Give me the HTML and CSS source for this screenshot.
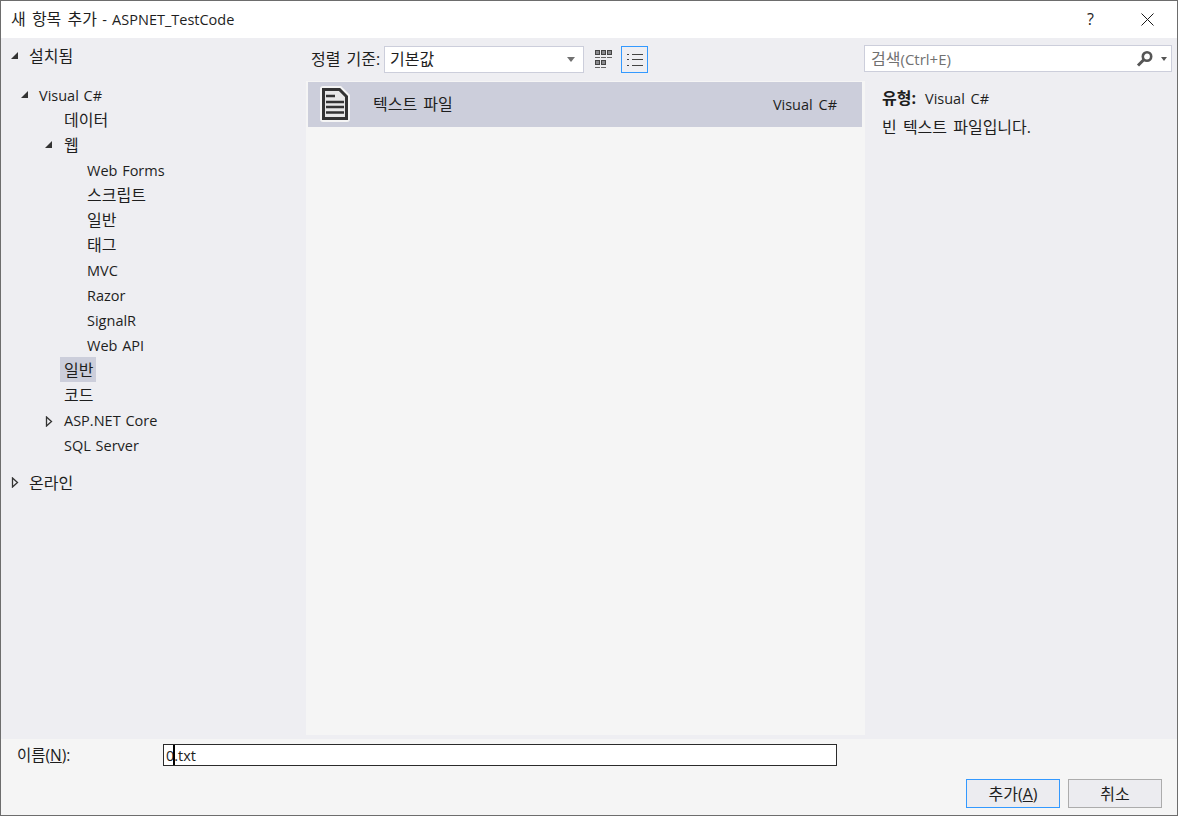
FILE: index.html
```html
<!DOCTYPE html>
<html lang="ko">
<head>
<meta charset="utf-8">
<title>새 항목 추가</title>
<link rel="stylesheet" href="styles.css">
</head>
<body>
<div class="window">
  <header class="titlebar">
    <div class="title"><span class="ko">새 항목 추가</span> - ASPNET_TestCode</div>
    <div class="help">?</div>
    <svg class="close" width="13" height="13" viewBox="0 0 13 13"><path d="M.5.5l12 12M12.500.5l-12 12" stroke="#1a1a1a" fill="none"/></svg>
  </header>
  <main class="main">
    <nav class="tree">
      <div class="row top"><svg class="arr" width="8" height="8" viewBox="0 0 8 8"><path d="M7 0v7H0z" fill="#333"/></svg><span class="ko">설치됨</span></div>
      <div class="group">
        <div class="row l1"><svg class="arr" width="8" height="8" viewBox="0 0 8 8"><path d="M7 0v7H0z" fill="#333"/></svg><span>Visual C#</span></div>
        <div class="row l2"><span class="ko">데이터</span></div>
        <div class="row l2"><svg class="arr" width="8" height="8" viewBox="0 0 8 8"><path d="M7 0v7H0z" fill="#333"/></svg><span class="ko">웹</span></div>
        <div class="row l3"><span>Web Forms</span></div>
        <div class="row l3"><span class="ko">스크립트</span></div>
        <div class="row l3"><span class="ko">일반</span></div>
        <div class="row l3"><span class="ko">태그</span></div>
        <div class="row l3"><span>MVC</span></div>
        <div class="row l3"><span>Razor</span></div>
        <div class="row l3"><span>SignalR</span></div>
        <div class="row l3"><span>Web API</span></div>
        <div class="row l2"><span class="ko sel">일반</span></div>
        <div class="row l2"><span class="ko">코드</span></div>
        <div class="row l2"><svg class="arr" width="8" height="11" viewBox="0 0 8 11"><path d="M1.500 1v9l5-4.500z" fill="none" stroke="#333" stroke-width="1.300"/></svg><span>ASP.NET Core</span></div>
        <div class="row l2"><span>SQL Server</span></div>
      </div>
      <div class="row top online"><svg class="arr" width="8" height="11" viewBox="0 0 8 11"><path d="M1.500 1v9l5-4.500z" fill="none" stroke="#333" stroke-width="1.300"/></svg><span class="ko">온라인</span></div>
    </nav>
    <section class="center">
      <div class="toolbar">
        <span class="ko sortlabel">정렬 기준:</span>
        <div class="combo"><span class="ko">기본값</span><i class="caret"></i></div>
        <svg class="gridicon" width="18" height="19" viewBox="0 0 18 19"><g fill="#8a8a8e" stroke="#444"><rect x=".5" y=".5" width="4" height="4"/><rect x="6.500" y=".5" width="4" height="4"/><rect x="12.500" y=".5" width="4" height="4"/><rect x=".5" y="10.500" width="4" height="4"/><rect x="6.500" y="10.500" width="4" height="4"/></g><path d="M0 7h5v1H0zM6 7h5v1H6zM12 7h5v1h-5zM0 17h5v1H0zM6 17h5v1H6z" fill="#666"/></svg>
        <div class="listbtn"><svg width="16" height="14" viewBox="0 0 16 14" fill="#444"><path d="M0 1h2v1H0zM5 1h11v1H5zM0 6h2v1H0zM5 6h11v1H5zM0 12h2v1H0zM5 12h11v1H5z"/></svg></div>
      </div>
      <div class="list">
        <div class="item">
          <svg class="doc" width="30" height="36" viewBox="0 0 30 36"><path d="M3 0h18l9 9v24a3 3 0 0 1-3 3H3a3 3 0 0 1-3-3V3a3 3 0 0 1 3-3z" fill="#f5f5f5"/><path d="M3.500 3.500h16l7 7v22h-23z" fill="#e8e8e8" stroke="#333" stroke-width="3"/><path d="M6 10h9M6 16h18M6 21h18M6 26.500h18" stroke="#333" stroke-width="2.400"/></svg>
          <span class="ko iname">텍스트 파일</span>
          <span class="itype">Visual C#</span>
        </div>
      </div>
    </section>
    <aside class="side">
      <div class="search"><span class="stext"><span class="ko">검색</span>(Ctrl+E)</span>
        <svg class="mag" width="17" height="16" viewBox="0 0 17 16"><circle cx="11" cy="5.500" r="4.200" fill="none" stroke="#555" stroke-width="2.600"/><path d="M8 8.500l-6 6" stroke="#555" stroke-width="3"/></svg>
        <i class="caret small"></i>
      </div>
      <div class="info">
        <div class="inforow"><b class="ko">유형:</b><span>Visual C#</span></div>
        <p class="ko desc">빈 텍스트 파일입니다.</p>
      </div>
    </aside>
  </main>
  <footer class="footer">
    <div class="namerow">
      <label class="ko namelabel">이름(<u>N</u>):</label>
      <div class="nameinput"><span>0</span><i class="cursor"></i><span class="ext">.txt</span></div>
    </div>
    <div class="buttons">
      <button class="ko btn primary">추가(<u>A</u>)</button>
      <button class="ko btn">취소</button>
    </div>
  </footer>
</div>
</body>
</html>
```
FILE: styles.css
```css
* { box-sizing: border-box; }
html, body { margin: 0; padding: 0; }
body {
  width: 1178px; height: 816px; overflow: hidden;
  font-family: "Open Sans", "Noto Sans CJK KR", sans-serif;
  font-size: 14.500px; word-spacing: 1px; color: #1e1e1e;
}
.ko { font-size: 16px; word-spacing: 2px; }
.window {
  width: 1178px; height: 816px; display: flex; flex-direction: column;
  border: 1px solid #6d6d6d; background: #eeeef2;
}
.titlebar { height: 37px; background: #fff; display: flex; align-items: center; padding: 0 23px 0 10px; flex: none; }
.title { flex: 1; padding-bottom: 4px; white-space: nowrap; word-spacing: 1.500px; }
.help { width: 10px; font-size: 16px; margin-right: 44px; padding-bottom: 2px; color: #222; }
.close { display: block; margin-bottom: 1px; }
.main { flex: 1; display: flex; min-height: 0; }
.tree { width: 305px; flex: none; padding-top: 6px; }
.row { height: 25px; display: flex; align-items: center; position: relative; white-space: nowrap; }
.row .ko { margin-bottom: 4px; }
.row .arr { position: absolute; top: 8px; }
.row.top { padding-left: 28px; }
.row.top .arr { left: 10px; }
.online .arr { top: 7px; }
.row.online .ko { margin-bottom: 2px; }
.group { margin-top: 14px; }
.l1 { padding-left: 38px; }
.l1 .arr { left: 20px; }
.l2 { padding-left: 63px; }
.l2 .arr { left: 44px; }
.l3 { padding-left: 86px; }
.row .sel { background: #cccedb; margin: 0 0 2px -4px; padding: 0 3px 0 4px; height: 25px; line-height: 26px; }
.online { margin-top: 12px; }
.center { width: 559px; flex: none; display: flex; flex-direction: column; }
.toolbar { height: 43px; display: flex; align-items: center; padding: 0 0 0 5px; flex: none; }
.sortlabel { width: 73px; white-space: nowrap; margin-bottom: 3px; }
.combo { width: 200px; height: 27px; background: #fff; border: 1px solid #cccedb; display: flex; align-items: center; padding: 0 8px 0 5px; justify-content: space-between; }
.combo .ko { margin-bottom: 3px; }
.caret { display: block; width: 0; height: 0; border: 4px solid transparent; border-top: 5px solid #717171; border-bottom: 0; }
.caret.small { border-width: 4px 3.500px 0; border-top-color: #555; }
.gridicon { margin-left: 11px; }
.listbtn { width: 27px; height: 27px; border: 1px solid #3399ff; margin-left: 8px; display: flex; align-items: center; justify-content: center; }
.list { flex: 1; background: #f5f5f5; margin-bottom: 4px; padding: 1px 3px 1px 2px; }
.item { height: 45px; background: #cccedb; display: flex; align-items: center; padding-left: 12px; }
.doc { flex: none; margin-bottom: 2px; }
.iname { margin-left: 23px; flex: 1; margin-bottom: 3px; }
.itype { margin-right: 25px; word-spacing: 2px; }
.side { flex: 1; padding: 7px 5px 0 0; min-width: 0; }
.search { width: 308px; height: 27px; margin-left: -1px; background: #fff; border: 1px solid #cccedb; display: flex; align-items: center; padding: 0 4px 0 6px; color: #717171; font-size: 15px; }
.stext { flex: 1; white-space: nowrap; padding-top: 1px; }
.stext .ko { line-height: 20px; }
.mag { margin-right: 8px; }
.info { padding: 14px 0 0 17px; }
.inforow { display: flex; gap: 9px; height: 24px; align-items: center; word-spacing: 2px; }
.inforow b { font-weight: 700; margin-bottom: 2px; }
.inforow span { margin-top: 1px; }
.desc { margin: 5px 0 0; line-height: 24px; }
.footer { height: 76px; flex: none; background: #f5f5f5; display: flex; flex-direction: column; padding-top: 5px; }
.namerow { display: flex; align-items: center; height: 22px; padding-left: 16px; }
.namelabel { width: 146px; flex: none; margin-bottom: 2px; font-size: 15.500px; }
.nameinput { width: 674px; height: 22px; background: #fff; border: 1px solid #2b2b2b; display: flex; align-items: center; padding-left: 2px; }
.cursor { width: 2px; height: 20px; background: #000; margin-left: -1px; }
.ext { margin-left: -1px; }
.buttons { display: flex; justify-content: flex-end; gap: 8px; margin-top: 13px; padding-right: 15px; }
.btn { width: 94px; height: 29px; background: #ececf0; border: 1px solid #acacac; color: inherit; font-family: inherit; padding: 0 0 1px; }
.primary { border-color: #3399ff; }
```
